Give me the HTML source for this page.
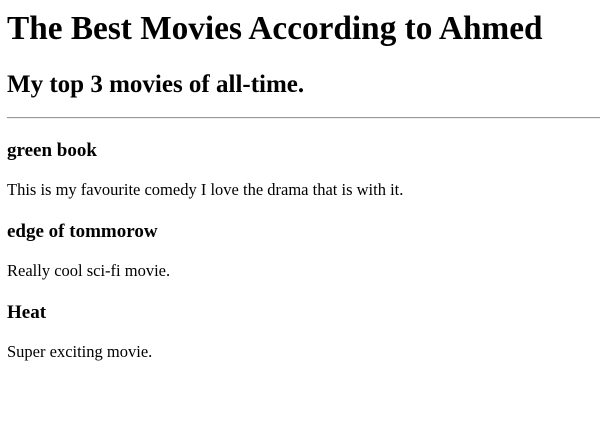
<!DOCTYPE html>
<html><head><meta charset="utf-8"><style>
body{margin:8px 7px 8px 7px;padding-top:2px;font-family:"Liberation Serif",serif;color:#000;background:#fff;}
h1{font-size:33.3px;margin:0 0 23px;}
h2{font-size:25px;margin:23px 0 18px;}
hr{margin:0 0 1px;border:0;border-top:1px solid #999;border-bottom:1px solid #eee;}
h3{font-size:19px;margin:21px 0 18px;}
p{font-size:16.5px;margin:18px 0;}
</style></head><body>
<h1>The Best Movies According to Ahmed</h1>
<h2>My top 3 movies of all-time.</h2>
<hr>
<h3>green book</h3>
<p>This is my favourite comedy I love the drama that is with it.</p>
<h3>edge of tommorow</h3>
<p>Really cool sci-fi movie.</p>
<h3>Heat</h3>
<p>Super exciting movie.</p>
</body></html>
